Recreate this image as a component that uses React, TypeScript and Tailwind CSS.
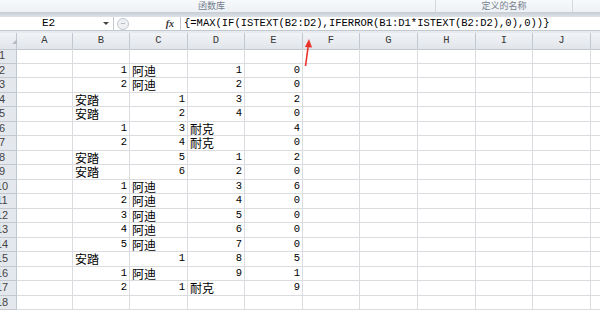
import React from 'react';

const cols = ['A', 'B', 'C', 'D', 'E', 'F', 'G', 'H', 'I', 'J', ''];

type Cell = string | number | null;

// rows 1..18, columns B..E
const data: Cell[][] = [
  [null, null, null, null],
  [1, '阿迪', 1, 0],
  [2, '阿迪', 2, 0],
  ['安踏', 1, 3, 2],
  ['安踏', 2, 4, 0],
  [1, 3, '耐克', 4],
  [2, 4, '耐克', 0],
  ['安踏', 5, 1, 2],
  ['安踏', 6, 2, 0],
  [1, '阿迪', 3, 6],
  [2, '阿迪', 4, 0],
  [3, '阿迪', 5, 0],
  [4, '阿迪', 6, 0],
  [5, '阿迪', 7, 0],
  ['安踏', 1, 8, 5],
  [1, '阿迪', 9, 1],
  [2, 1, '耐克', 9],
  [null, null, null, null],
];

const gridCols =
  'grid grid-cols-[17px_56px_57px_58px_57px_58px_57px_58px_58px_57px_58px_30px]';

const DataCell = ({ value }: { value: Cell }) => {
  if (value === null) {
    return <div className="border-r border-b border-[#dadcdf]" />;
  }
  if (typeof value === 'number') {
    return (
      <div className="flex items-center justify-end pr-[2px] border-r border-b border-[#dadcdf] font-['Liberation_Mono',monospace] text-[10.5px] leading-[13px] text-black">
        {value}
      </div>
    );
  }
  return (
    <div className="flex items-center pl-[2px] border-r border-b border-[#dadcdf] font-['Noto_Sans_CJK_SC',sans-serif] text-[12px] leading-[13px] text-black whitespace-nowrap">
      {value}
    </div>
  );
};

export default function App() {
  return (
    <div className="relative w-[600px] h-[311px] overflow-hidden bg-white font-['Liberation_Sans',sans-serif]">
      {/* ribbon group labels */}
      <div className="flex h-[12px] bg-gradient-to-b from-[#f7f9fb] to-[#eef1f5] text-[9px] leading-[12px] text-[#75808e] font-['Noto_Sans_CJK_SC',sans-serif]">
        <div className="w-[435px] text-center">
          <span className="inline-block -translate-x-[6px]">函数库</span>
        </div>
        <div className="w-[138px] border-l border-r border-[#d5dae1] text-center">定义的名称</div>
      </div>
      <div className="h-[5px] bg-gradient-to-b from-[#c6ccd4] to-[#dfe3e8]" />

      {/* formula bar */}
      <div className="flex h-[14px] bg-white border-b border-[#c3c9d1]">
        <div className="relative flex w-[114px] items-center justify-center border-r border-[#c3c9d1] font-['Liberation_Mono',monospace] text-[11px] text-black">
          <span className="-translate-x-[8px]">E2</span>
          <span className="absolute right-[4px] top-[5px] h-0 w-0 border-x-[3px] border-t-[3px] border-x-transparent border-t-[#444]" />
        </div>
        <div className="flex w-[66px] items-center bg-white">
          <div className="ml-[3px] flex h-[12px] w-[12px] items-center justify-center rounded-full border border-[#c4c9d0] bg-[#eef0f3]">
            <span className="h-[1px] w-[4px] bg-[#b9bec6]" />
          </div>
          <span className="ml-auto mr-[6px] font-['Liberation_Serif',serif] italic font-bold text-[10px] text-[#333]">
            fx
          </span>
        </div>
        <div className="flex flex-1 items-center border-l border-[#c3c9d1] pl-[3px] font-['Liberation_Mono',monospace] text-[10.5px] text-black whitespace-nowrap">
          {'{=MAX(IF(ISTEXT(B2:D2),IFERROR(B1:D1*ISTEXT(B2:D2),0),0))}'}
        </div>
      </div>
      <div className="h-[2px] bg-[#e7eaee]" />

      {/* column header */}
      <div className={`${gridCols} h-[16px]`}>
        <div className="relative border-r border-b border-[#c2c8d0] bg-gradient-to-b from-[#f1f3f6] to-[#e1e5ea]">
          <span className="absolute left-[7px] top-[6px] h-0 w-0 border-l-[5px] border-t-[5px] border-l-transparent border-t-transparent [border-right:5px_solid_#b7bcc4]" />
        </div>
        {cols.map((c, i) => (
          <div
            key={i}
            className="flex items-center justify-center border-r border-b border-[#c2c8d0] bg-gradient-to-b from-[#f1f3f6] to-[#e1e5ea] font-['Liberation_Mono',monospace] text-[10.5px] text-[#3a3a3a]"
          >
            {c}
          </div>
        ))}
      </div>

      {/* rows */}
      {data.map((row, r) => (
        <div key={r} className={`${gridCols} h-[14.5px]`}>
          <div className="flex items-center overflow-hidden border-r border-b border-[#c2c8d0] bg-[#e4e8ed]">
            <span className="-ml-[12px] w-[28px] shrink-0 text-center font-['Liberation_Sans',sans-serif] text-[11px] leading-[13px] text-[#444]">
              {r + 1}
            </span>
          </div>
          <div className="border-r border-b border-[#dadcdf]" />
          {row.map((v, ci) => (
            <DataCell key={ci} value={v} />
          ))}
          {Array.from({ length: 6 }).map((_, k) => (
            <div key={k} className="border-r border-b border-[#dadcdf]" />
          ))}
        </div>
      ))}

      {/* red arrow annotation */}
      <svg className="absolute left-[298px] top-[36px]" width="20" height="32" viewBox="0 0 20 32">
        <line x1="7.5" y1="30" x2="10.5" y2="8" stroke="#e8322a" strokeWidth="1.6" />
        <polygon points="11,3 7,11 14,11.5" fill="#e8322a" />
      </svg>
    </div>
  );
}
